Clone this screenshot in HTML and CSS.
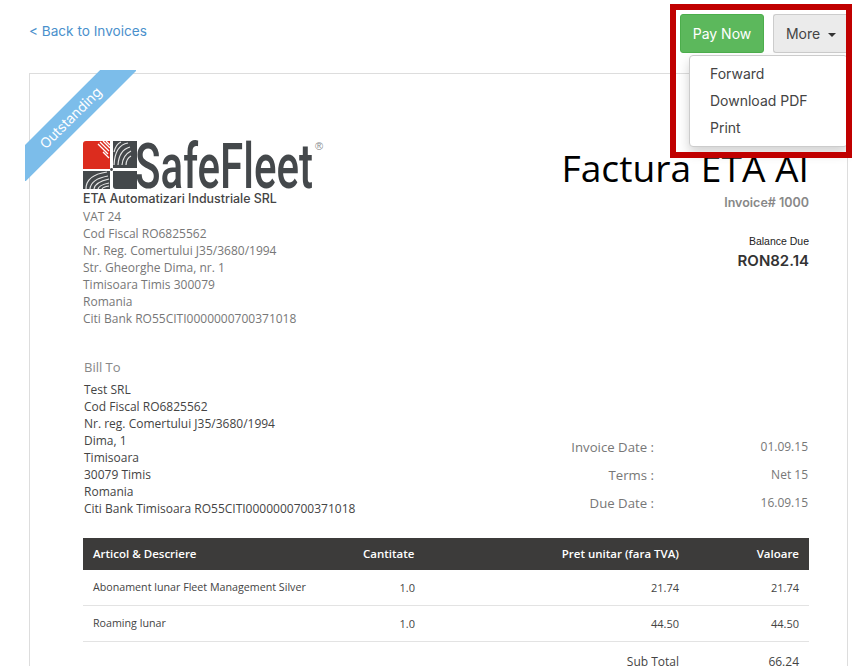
FILE: index.html
```html
<!DOCTYPE html>
<html lang="en">
<head>
    <meta charset="UTF-8">
    <meta name="viewport" content="width=device-width, initial-scale=1.0">
    <title>Factura ETA AI</title>
    <link rel="stylesheet" href="styles.css">
</head>
<body>
    <!-- Top bar -->
    <header class="top-bar">
        <a class="back-link" href="#">&lt; Back to Invoices</a>
        <div class="actions">
            <button type="button" class="btn btn-pay">Pay Now</button>
            <button type="button" class="btn btn-more">More <span class="caret"></span></button>
        </div>
    </header>

    <ul class="dropdown">
        <li>Forward</li>
        <li>Download PDF</li>
        <li>Print</li>
    </ul>
    <div class="highlight"></div>

    <!-- Invoice -->
    <main class="invoice">
        <div class="ribbon"><span>Outstanding</span></div>

        <section class="invoice-top">
            <div class="company">
                <svg class="logo" width="243" height="50" viewBox="0 0 243 50">
                    <path d="M3 1 h24 v28 h-27 v-25 q0 -3 3 -3 z" fill="#dc2c1e"/>
                    <path d="M17 2 l9 9 M20 1 l7 7 M23 1 l4 4 M15 4 l10 10 M20 12 l6 6" stroke="#fff" stroke-width="1.3"/>
                    <path d="M30 1 h24 v27 h-24 z" fill="#44484b"/>
                    <path d="M31 25 q1 -20 14 -22 M35 25 q1 -15 12 -18 M39 25 q1 -10 9 -14 M43 25 q0 -6 5 -9 M31 12 q2 -8 7 -10" stroke="#e6e6e6" stroke-width="1.2" fill="none"/>
                    <rect x="0" y="31" width="27" height="18" fill="#44484b"/>
                    <path d="M3 49 q0 -14 21 -17 M7 49 q1 -10 18 -13 M11 49 q1 -7 15 -10 M15 49 q1 -4 11 -6 M19 49 q1 -2 7 -3" stroke="#e6e6e6" stroke-width="1.2" fill="none"/>
                    <path d="M30 31 h24 v18 h-21 q-3 0 -3 -3 z" fill="#44484b"/>
                    <circle cx="28.5" cy="29.5" r="1.4" fill="#44484b"/>
                    <text class="logo-word" x="52" y="48" textLength="178" lengthAdjust="spacingAndGlyphs">SafeFleet</text>
                    <text class="logo-mark" x="232" y="10">®</text>
                </svg>
                <div class="company-name">ETA Automatizari Industriale SRL</div>
                <div class="address">
                    VAT 24<br>
                    Cod Fiscal RO6825562<br>
                    Nr. Reg. Comertului J35/3680/1994<br>
                    Str. Gheorghe Dima, nr. 1<br>
                    Timisoara Timis 300079<br>
                    Romania<br>
                    Citi Bank RO55CITI0000000700371018
                </div>
            </div>
            <div class="summary">
                <h1>Factura ETA AI</h1>
                <div class="invoice-no">Invoice# 1000</div>
                <div class="balance-label">Balance Due</div>
                <div class="balance">RON82.14</div>
            </div>
        </section>

        <section class="invoice-mid">
            <div class="bill-to">
                <div class="bill-label">Bill To</div>
                <div class="bill-lines">
                    Test SRL<br>
                    Cod Fiscal RO6825562<br>
                    Nr. reg. Comertului J35/3680/1994<br>
                    Dima, 1<br>
                    Timisoara<br>
                    30079 Timis<br>
                    Romania<br>
                    Citi Bank Timisoara RO55CITI0000000700371018
                </div>
            </div>
            <dl class="dates">
                <dt>Invoice Date :</dt><dd>01.09.15</dd>
                <dt>Terms :</dt><dd>Net 15</dd>
                <dt>Due Date :</dt><dd>16.09.15</dd>
            </dl>
        </section>

        <table class="items">
            <thead>
                <tr>
                    <th class="col-name">Articol &amp; Descriere</th>
                    <th class="col-qty">Cantitate</th>
                    <th class="col-price">Pret unitar (fara TVA)</th>
                    <th class="col-total">Valoare</th>
                </tr>
            </thead>
            <tbody>
                <tr>
                    <td class="col-name">Abonament lunar Fleet Management Silver</td>
                    <td class="col-qty">1.0</td>
                    <td class="col-price">21.74</td>
                    <td class="col-total">21.74</td>
                </tr>
                <tr>
                    <td class="col-name">Roaming lunar</td>
                    <td class="col-qty">1.0</td>
                    <td class="col-price">44.50</td>
                    <td class="col-total">44.50</td>
                </tr>
            </tbody>
        </table>

        <div class="totals">
            <span class="totals-label">Sub Total</span>
            <span class="totals-value">66.24</span>
        </div>
    </main>
</body>
</html>
```

FILE: styles.css
```css
html, body {
    height: 666px;
    overflow: hidden;
}
body {
    font-family: "Open Sans", sans-serif;
    font-size: 12px;
    margin: 0;
    padding: 0 4px 0 29px;
    background-color: #fff;
    color: #333;
    position: relative;
}
.top-bar {
    display: flex;
    justify-content: space-between;
    height: 73px;
}
.back-link {
    margin-top: 22px;
    font-family: Inter, sans-serif;
    font-size: 13.6px;
    line-height: 18px;
    color: #4a90cc;
    text-decoration: none;
}
.actions {
    display: flex;
    gap: 9px;
    padding-top: 14px;
    align-items: flex-start;
}
.btn {
    height: 39px;
    font-family: Inter, sans-serif;
    font-size: 14px;
    border-radius: 3px;
    padding: 0;
}
.btn-pay {
    width: 84px;
    background-color: #5cb85c;
    border: 1px solid #4cae4c;
    color: #fff;
}
.btn-more {
    width: 75px;
    background-color: #ebebeb;
    border: 1px solid #ccc;
    border-right: 0;
    border-radius: 3px 0 0 3px;
    color: #444;
}
.caret {
    display: inline-block;
    margin-left: 4px;
    vertical-align: middle;
    border-top: 4px solid #333;
    border-left: 4px solid transparent;
    border-right: 4px solid transparent;
}
.dropdown {
    position: absolute;
    left: 689px;
    top: 55px;
    width: 159px;
    height: 92px;
    box-sizing: border-box;
    margin: 0;
    padding: 4px 0;
    list-style: none;
    background: #fff;
    border: 1px solid #ccc;
    border-radius: 4px;
    box-shadow: 0 6px 12px rgba(0, 0, 0, 0.175);
    z-index: 5;
    font-family: Inter, sans-serif;
    font-size: 14px;
    color: #444;
}
.dropdown li {
    padding-left: 20px;
    height: 27px;
    line-height: 28px;
}
/* red annotation round the actions */
.highlight {
    position: absolute;
    left: 670px;
    top: 4px;
    width: 182px;
    height: 154px;
    box-sizing: border-box;
    border: 6px solid #c00000;
    z-index: 6;
}
.invoice {
    position: relative;
    border: 1px solid #ddd;
    padding: 66px 38px 0 53px;
}
.ribbon {
    position: absolute;
    left: -5px;
    top: -4px;
    width: 111px;
    height: 111px;
    overflow: hidden;
}
.ribbon span {
    position: absolute;
    left: -37px;
    top: 25px;
    width: 185px;
    height: 26px;
    box-sizing: border-box;
    padding-right: 28px;
    line-height: 26px;
    text-align: center;
    font-family: Inter, sans-serif;
    font-size: 14px;
    color: #fff;
    background-color: #7cbdea;
    transform: rotate(-45deg);
}
.invoice-top {
    display: flex;
    justify-content: space-between;
}
.logo {
    display: block;
    overflow: visible;
}
.logo-word {
    font-family: Roboto, sans-serif;
    font-size: 63px;
    font-weight: 500;
    fill: #44484b;
}
.logo-mark {
    font-family: "Liberation Sans", sans-serif;
    font-size: 11px;
    fill: #8a8d8f;
}
.company-name {
    font-family: Inter, sans-serif;
    font-size: 12.4px;
    font-weight: 500;
    line-height: 17px;
    color: #444;
}
.address {
    margin-top: 1px;
    line-height: 17px;
    color: #777;
}
.summary {
    text-align: right;
}
.summary h1 {
    margin: 3px 0 0;
    font-size: 37.2px;
    font-weight: 400;
    line-height: 50px;
    color: #000;
}
.invoice-no {
    margin-top: 2px;
    font-family: Inter, sans-serif;
    font-weight: 600;
    font-size: 12.5px;
    line-height: 16px;
    color: #888;
}
.balance-label {
    margin-top: 23px;
    font-family: "Liberation Sans", sans-serif;
    font-size: 10.5px;
    line-height: 15px;
    color: #222;
}
.balance {
    margin-top: 3px;
    font-family: Inter, sans-serif;
    font-size: 15px;
    font-weight: 600;
    line-height: 18px;
    color: #333;
}
.invoice-mid {
    display: flex;
    justify-content: space-between;
    align-items: flex-end;
    margin-top: 31px;
}
.bill-label {
    font-size: 13px;
    line-height: 18px;
    padding-left: 1px;
    color: #888;
}
.bill-lines {
    margin-top: 5px;
    padding-left: 1px;
    line-height: 17px;
    color: #444;
}
.dates {
    display: grid;
    grid-template-columns: 85px 154px;
    grid-auto-rows: 28px;
    margin: 0 1px 0 0;
    color: #777;
}
.dates dt {
    text-align: right;
    font-size: 13.2px;
    line-height: 28px;
    white-space: nowrap;
}
.dates dd {
    margin: 0;
    text-align: right;
    line-height: 28px;
}
.items {
    width: 726px;
    table-layout: fixed;
    margin-top: 21px;
    border-collapse: separate;
    border-spacing: 0;
    font-size: 10.7px;
    color: #444;
}
.items th {
    height: 32px;
    padding: 0 10px 2px;
    box-sizing: border-box;
    background-color: #3c3b3a;
    color: #fff;
    font-size: 11.5px;
    font-weight: 600;
}
.items td {
    height: 36px;
    padding: 0 10px 1px;
    box-sizing: border-box;
    border-bottom: 1px solid #e3e3e3;
}
.col-name {
    text-align: left;
    width: 270px;
}
.col-qty {
    text-align: right;
    width: 71px;
}
.col-price {
    text-align: right;
}
.col-total {
    text-align: right;
    width: 120px;
}
.items td.col-qty, .items td.col-price, .items td.col-total {
    font-size: 11px;
}
.items td.col-qty {
    padding-right: 9px;
}
.totals {
    display: flex;
    justify-content: flex-end;
    margin-top: 12px;
    padding-right: 10px;
    font-size: 12px;
    line-height: 16px;
    color: #444;
}
.totals-value {
    width: 120px;
    text-align: right;
}
```
